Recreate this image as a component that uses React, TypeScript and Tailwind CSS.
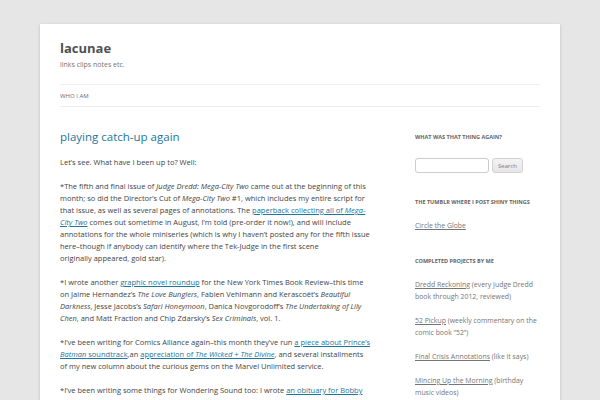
import React from "react";

const font = { fontFamily: '"Open Sans", "Liberation Sans", sans-serif' };

const A = ({ children }: { children: React.ReactNode }) => (
	<a href="#" className="text-[#21759b] underline">
		{children}
	</a>
);

const WidgetTitle = ({ children }: { children: React.ReactNode }) => (
	<h3 className="text-[5.5px] leading-[11px] font-bold uppercase text-[#636363] mb-[12px]">{children}</h3>
);

const projects = [
	{ name: "Dredd Reckoning", note: "(every Judge Dredd book through 2012, reviewed)" },
	{ name: "52 Pickup", note: "(weekly commentary on the comic book “52”)" },
	{ name: "Final Crisis Annotations", note: "(like it says)" },
	{ name: "Mincing Up the Morning", note: "(birthday music videos)" },
];

const App = () => {
	return (
		<div className="min-h-screen bg-[#e6e6e6] pt-[24px]" style={font}>
			<div className="mx-auto w-[520px] bg-white px-[20px] pt-[16px] pb-[40px] shadow-[0_1px_3px_rgba(100,100,100,0.3)]">
				{/* header */}
				<header>
					<h1 className="text-[13px] leading-[16px] font-bold text-[#515151]">lacunae</h1>
					<h2 className="mt-[3px] text-[7px] leading-[12px] text-[#757575]">links clips notes etc.</h2>
					<nav className="mt-[13px] h-[23px] border-y border-[#ededed] flex items-center">
						<a href="#" className="text-[6px] uppercase text-[#6a6a6a] leading-none">
							Who I Am
						</a>
					</nav>
				</header>

				<div className="flex justify-between">
					{/* main */}
					<main className="w-[312px] pt-[24px] text-[7.5px] leading-[12px] text-[#444]">
						<h1 className="text-[11.5px] leading-[12px] text-[#21759b] mb-[13px]">playing catch-up again</h1>
						<p className="mb-[12px]">Let’s see. What have I been up to? Well:</p>
						<p className="mb-[12px]">
							*The fifth and final issue of <i>Judge Dredd: Mega-City Two</i> came out at the beginning of this
							month; so did the Director’s Cut of <i>Mega-City Two</i> #1, which includes my entire script for that
							issue, as well as several pages of annotations. The{" "}
							<A>
								paperback collecting all of <i>Mega-City Two</i>
							</A>{" "}
							comes out sometime in August, I’m told (pre-order it now!), and will include annotations for the whole
							miniseries (which is why I haven’t posted any for the fifth issue here–though if anybody can identify
							where the Tek-Judge in the first scene
							<br />
							originally appeared, gold star).
						</p>
						<p className="mb-[12px]">
							*I wrote another <A>graphic novel roundup</A> for the New York Times Book Review–this time on Jaime
							Hernandez’s <i>The Love Bunglers</i>, Fabien Vehlmann and Kerascoët’s <i>Beautiful Darkness</i>, Jesse
							Jacobs’s <i>Safari Honeymoon</i>, Danica Novgorodoff’s <i>The Undertaking of Lily Chen</i>, and Matt
							Fraction and Chip Zdarsky’s <i>Sex Criminals</i>, vol. 1.
						</p>
						<p className="mb-[12px]">
							*I’ve been writing for Comics Alliance again–this month they’ve run{" "}
							<A>
								a piece about Prince’s <i>Batman</i> soundtrack
							</A>
							,an{" "}
							<A>
								appreciation of <i>The Wicked + The Divine</i>
							</A>
							, and several installments of my new column about the curious gems on the Marvel Unlimited service.
						</p>
						<p className="mb-[12px]">
							*I’ve been writing some things for Wondering Sound too: I wrote <A>an obituary for Bobby Womack</A>,
							and wrote the secret <A>history of Life Without Buildings’ Any Other City</A>.
						</p>
					</main>

					{/* sidebar */}
					<aside className="w-[125px] pt-[25px] text-[6.9px] leading-[12px] text-[#757575]">
						<section className="mb-[24px]">
							<WidgetTitle>What was that thing again?</WidgetTitle>
							<form className="mt-[15px] flex items-center gap-[3px]" onSubmit={(e) => e.preventDefault()}>
								<input
									type="text"
									className="w-[74px] h-[15px] border border-[#cccccc] rounded-[3px] px-[3px] text-[6.5px] outline-none"
								/>
								<button
									type="submit"
									className="w-[31px] h-[15px] border border-[#d2d2d2] rounded-[3px] bg-gradient-to-b from-[#f4f4f4] to-[#e6e6e6] text-[6px] text-[#7c7c7c]"
								>
									Search
								</button>
							</form>
						</section>

						<section className="mb-[24px]">
							<WidgetTitle>The Tumblr where I post shiny things</WidgetTitle>
							<a href="#" className="underline">
								Circle the Globe
							</a>
						</section>

						<section>
							<WidgetTitle>Completed projects by me</WidgetTitle>
							<ul className="flex flex-col gap-[12px]">
								{projects.map((p) => (
									<li key={p.name}>
										<a href="#" className="underline">
											{p.name}
										</a>{" "}
										{p.note}
									</li>
								))}
							</ul>
						</section>
					</aside>
				</div>
			</div>
		</div>
	);
};

export default App;
